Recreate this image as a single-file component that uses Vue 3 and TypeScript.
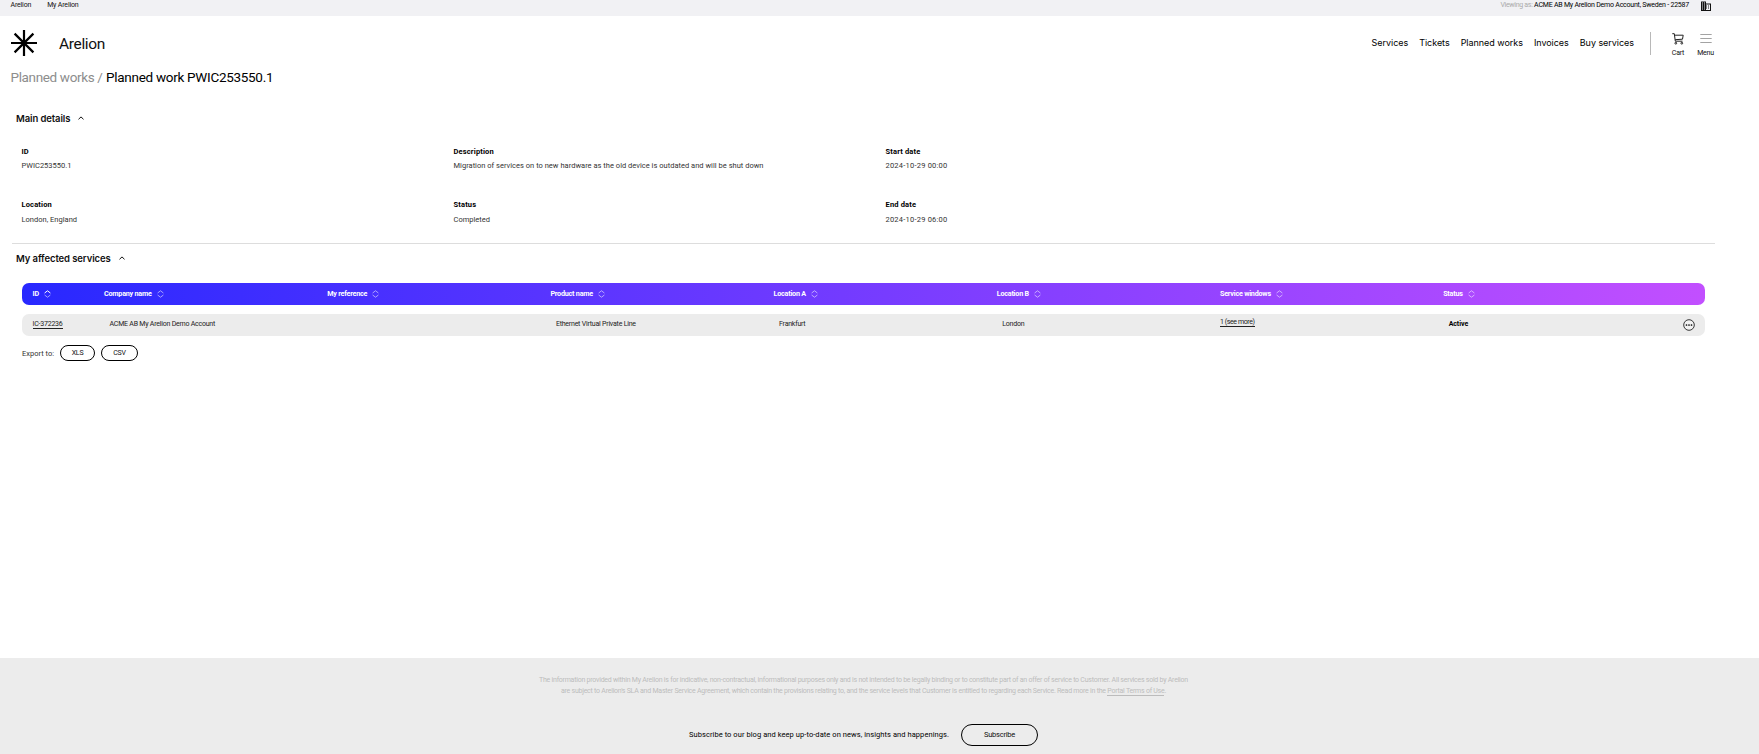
<script setup lang="ts">
interface Detail { label: string; value: string; numeric?: boolean }
interface Column { label: string; active?: boolean }

const navItems = ['Services', 'Tickets', 'Planned works', 'Invoices', 'Buy services']

const details: Detail[] = [
  { label: 'ID', value: 'PWIC253550.1' },
  { label: 'Description', value: 'Migration of services on to new hardware as the old device is outdated and will be shut down' },
  { label: 'Start date', value: '2024-10-29 00:00', numeric: true },
  { label: 'Location', value: 'London, England' },
  { label: 'Status', value: 'Completed' },
  { label: 'End date', value: '2024-10-29 06:00', numeric: true },
]

const columns: Column[] = [
  { label: 'ID', active: true },
  { label: 'Company name' },
  { label: 'My reference' },
  { label: 'Product name' },
  { label: 'Location A' },
  { label: 'Location B' },
  { label: 'Service windows' },
  { label: 'Status' },
]
</script>

<template>
  <div class="page">
    <div class="topbar">
      <a class="site">Arelion</a>
      <a class="site">My Arelion</a>
      <span class="viewing"><span class="muted">Viewing as:</span> <span class="account">ACME AB My Arelion Demo Account, Sweden - 22587</span></span>
      <svg class="building" viewBox="0 0 10 10">
        <path fill="#111" fill-rule="evenodd" d="M0 0.500h5v2h5v7.500H0zM1 1.500v1h1v-1zM3 1.500v1h1v-1zM1 3.500v1h1v-1zM3 3.500v1h1v-1zM1 5.500v1h1v-1zM3 5.500v1h1v-1zM1 7.500v1h1v-1zM3 7.500v1h1v-1zM5 3.500v1h1v1H5v1h1v1H5v1.500h4V3.500z" />
        <path fill="#111" d="M7 4.500h1v1H7zM7 6.500h1v1H7z" />
      </svg>
    </div>

    <header class="header">
      <svg class="logo" viewBox="0 0 26 26">
        <path d="M13 0v26M0 13h26M3.600 3.600l18.800 18.800M22.400 3.600L3.600 22.400" stroke="#000" stroke-width="2.200" fill="none" />
      </svg>
      <span class="brand">Arelion</span>
      <nav class="nav">
        <a v-for="item in navItems" :key="item">{{ item }}</a>
      </nav>
      <div class="divider"></div>
      <div class="tool cart">
        <svg viewBox="0 0 12 12" fill="none" stroke="#222" stroke-width="1">
          <path d="M0.300 0.700h2l1 7.500h7.200M2.600 2.200h8.600L10.500 6.200 3.200 6.700" />
          <circle cx="3.800" cy="10.200" r="0.900" /><circle cx="9.800" cy="10.200" r="0.900" />
        </svg>
        <span>Cart</span>
      </div>
      <div class="tool menu">
        <svg viewBox="0 0 12 12" stroke="#999" stroke-width="0.900"><path d="M0.300 1.500h11.400M0.300 5.500h11.400M0.300 9.500h11.400" /></svg>
        <span>Menu</span>
      </div>
    </header>

    <div class="crumbs"><span class="parent">Planned works /</span><span>Planned work PWIC253550.1</span></div>

    <section class="main-details">
      <h2>Main details<svg class="chev" viewBox="0 0 6 4"><path d="M0.500 3.300L3 0.900l2.500 2.400" fill="none" stroke="#111" /></svg></h2>
      <dl class="grid">
        <div v-for="d in details" :key="d.label">
          <dt>{{ d.label }}</dt>
          <dd :class="{ numeric: d.numeric }">{{ d.value }}</dd>
        </div>
      </dl>
    </section>

    <section class="services">
      <h2>My affected services<svg class="chev" viewBox="0 0 6 4"><path d="M0.500 3.300L3 0.900l2.500 2.400" fill="none" stroke="#111" /></svg></h2>
      <div class="row head">
        <div v-for="c in columns" :key="c.label" class="cell">
          <span>{{ c.label }}</span>
          <svg class="sort" viewBox="0 0 7 8" fill="none" stroke="#fff">
            <path d="M0.600 3L3.500 0.800l2.900 2.200" :opacity="c.active ? 1 : 0.550" />
            <path d="M0.600 5L3.500 7.200l2.900-2.200" opacity="0.550" />
          </svg>
        </div>
      </div>
      <div class="row body">
        <div class="cell"><a class="link">IC-372236</a></div>
        <div class="cell inset">ACME AB My Arelion Demo Account</div>
        <div class="cell"></div>
        <div class="cell inset">Ethernet Virtual Private Line</div>
        <div class="cell inset">Frankfurt</div>
        <div class="cell inset">London</div>
        <div class="cell windows"><a class="link">1 (see more)</a></div>
        <div class="cell inset status"><span>Active</span>
          <svg class="more" viewBox="0 0 12 12"><circle cx="6" cy="6" r="5.300" fill="#fff" fill-opacity="0.300" stroke="#222" stroke-width="0.900" /><circle cx="3.500" cy="6" r="0.850" /><circle cx="6" cy="6" r="0.850" /><circle cx="8.500" cy="6" r="0.850" /></svg>
        </div>
      </div>
      <div class="export">
        <span>Export to:</span>
        <button class="xls">XLS</button>
        <button class="csv">CSV</button>
      </div>
    </section>

    <footer class="footer">
      <p class="legal">The information provided within My Arelion is for indicative, non-contractual, informational purposes only and is not intended to be legally binding or to constitute part of an offer of service to Customer. All services sold by Arelion</p>
      <p class="legal">are subject to Arelion's SLA and Master Service Agreement, which contain the provisions relating to, and the service levels that Customer is entitled to regarding each Service. Read more in the <a>Portal Terms of Use</a>.</p>
      <div class="subscribe">
        <span>Subscribe to our blog and keep up-to-date on news, insights and happenings.</span>
        <button>Subscribe</button>
      </div>
    </footer>
  </div>
</template>

<style>
body { margin: 0; background: #fff; }
</style>

<style scoped>
.page {
  width: 1759px;
  height: 754px;
  display: flex;
  flex-direction: column;
  overflow: hidden;
  box-sizing: border-box;
  font-family: Roboto, "Liberation Sans", sans-serif;
  font-size: 7px;
  letter-spacing: -0.22px;
  color: #111;
}
h2, p, dl, dd { margin: 0; }
button {
  font: inherit;
  letter-spacing: inherit;
  color: #111;
  background: transparent;
  border: 1px solid #000;
  padding: 0;
  box-sizing: border-box;
}
svg { display: block; flex: none; }
.topbar {
  height: 16px;
  flex: none;
  box-sizing: border-box;
  padding: 0 48.500px 0 10.500px;
  background: #f1f1f4;
  display: flex;
  align-items: flex-start;
  line-height: 11px;
}
.site { margin-right: 16px; letter-spacing: -0.170px; }
.viewing { margin-left: auto; }
.muted { color: #aaa; letter-spacing: -0.300px; }
.account { color: #000; }
.building { width: 10px; height: 10px; margin: 0.500px 0 0 11.500px; }
.header {
  height: 53px;
  flex: none;
  display: flex;
  align-items: flex-start;
  padding: 0 45px 0 11px;
}
.logo { width: 26px; height: 26px; margin-top: 14px; }
.brand { font-size: 15.500px; letter-spacing: -0.340px; line-height: 20px; margin: 17.500px 0 0 22px; }
.nav {
  display: flex;
  gap: 11px;
  margin: 20px 15.500px 0 auto;
  font: 9px/13px Inter, "Liberation Sans", sans-serif;
  letter-spacing: -0.040px;
  white-space: nowrap;
  color: #000;
}
.divider { width: 1px; height: 23px; margin-top: 16px; background: #b8b8b8; }
.tool {
  display: flex;
  flex-direction: column;
  align-items: center;
  margin-top: 17px;
  line-height: 9px;
}
.tool svg { width: 12px; height: 12px; }
.tool span { margin-top: 4px; }
.cart { width: 16px; margin-left: 19.500px; }
.menu { width: 17px; margin-left: 11px; }
.crumbs {
  height: 37px;
  flex: none;
  padding-left: 10.500px;
  font-size: 13.500px;
  line-height: 16px;
  letter-spacing: -0.290px;
  color: #000;
}
.parent { color: #8d8d8d; letter-spacing: -0.350px; margin-right: 3.500px; }
h2 {
  display: flex;
  align-items: center;
  font: 600 9.500px/13px Inter, "Liberation Sans", sans-serif;
  letter-spacing: -0.100px;
  padding-left: 16px;
}
.chev { width: 6px; height: 4px; margin: -1px 0 0 8px; }
.main-details {
  height: 138px;
  flex: none;
  margin: 0 44px 0 11.500px;
  box-sizing: border-box;
  padding-top: 6px;
  border-bottom: 1px solid #ddd;
}
.main-details h2 { padding-left: 4.500px; }
.grid {
  display: grid;
  grid-template-columns: 432px 432px 1fr;
  grid-auto-rows: 53.500px;
  padding: 21.500px 0 0 10px;
  font-size: 7.500px;
}
dt { font-weight: 700; line-height: 10px; letter-spacing: 0.160px; color: #000; }
dd { line-height: 10px; margin-top: 4.500px; letter-spacing: 0.018px; color: #333; white-space: nowrap; }
.numeric { letter-spacing: 0.220px; }
.services { padding-top: 8px; }
.row {
  height: 22px;
  box-sizing: border-box;
  margin: 0 54px 0 22px;
  padding-left: 10.500px;
  border-radius: 7px;
  display: grid;
  grid-template-columns: 71.500px repeat(6, 223.200px) 1fr;
  align-items: center;
  white-space: nowrap;
}
.head {
  margin-top: 18px;
  background: linear-gradient(90deg, #2828ff, #c24fff);
  color: #fff;
  font-size: 7.200px;
  font-weight: 700;
}
.cell { display: flex; align-items: center; line-height: 10px; }
.head .cell { gap: 5px; }
.sort { width: 7px; height: 8px; }
.body { margin-top: 9px; background: #ececec; color: #222; }
.body .cell { padding-bottom: 2px; }
.inset { padding-left: 5.500px; }
.body .windows { padding-bottom: 5px; }
.link { border-bottom: 1px solid #222; line-height: 8px; }
.windows .link { letter-spacing: -0.400px; }
.body .status { padding-bottom: 0; justify-content: space-between; color: #000; font-weight: 700; letter-spacing: -0.060px; }
.status span { padding-bottom: 2px; }
.more { width: 12px; height: 12px; margin: -1px 10.500px 0 0; }
.export {
  display: flex;
  align-items: center;
  height: 16px;
  margin: 9px 0 0 22px;
}
.export span { font-size: 7.500px; letter-spacing: 0; width: 38px; color: #333; }
.export button { height: 16px; border-radius: 8px; }
.xls { width: 35px; margin-right: 6px; }
.csv { width: 37px; }
.footer {
  height: 96px;
  margin-top: auto;
  flex: none;
  box-sizing: border-box;
  padding: 17px 32px 0 0;
  background: #ececec;
  text-align: center;
}
.legal { line-height: 11px; letter-spacing: -0.240px; color: #bcbcbc; white-space: nowrap; }
.legal a { border-bottom: 1px solid #bcbcbc; }
.subscribe {
  display: flex;
  justify-content: center;
  align-items: center;
  gap: 12px;
  margin-top: 27px;
  font-size: 7.500px;
  letter-spacing: 0.066px;
  color: #000;
}
.subscribe span { padding-bottom: 1.500px; }
.subscribe button { width: 77px; height: 22px; border-radius: 11px; padding-bottom: 1.500px; letter-spacing: -0.240px; }
</style>
